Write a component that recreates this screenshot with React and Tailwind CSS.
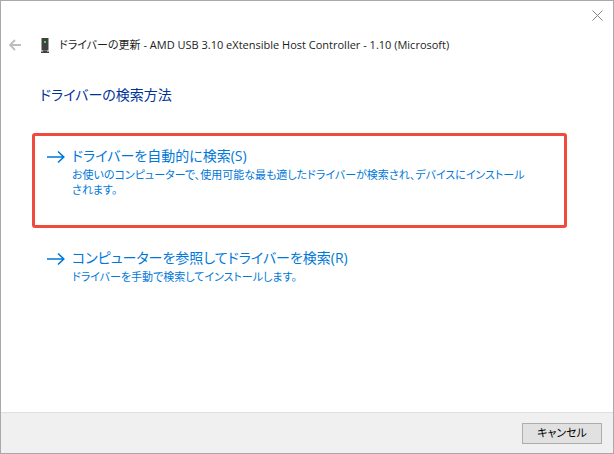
import { useState } from "react";

const choices = [
  {
    id: "auto",
    title: "ドライバーを自動的に検索(S)",
    lines: [
      "お使いのコンピューターで、使用可能な最も適したドライバーが検索され、デバイスにインストール",
      "されます。",
    ],
  },
  {
    id: "browse",
    title: "コンピューターを参照してドライバーを検索(R)",
    lines: ["ドライバーを手動で検索してインストールします。"],
  },
];

function ArrowRight() {
  return (
    <svg viewBox="0 0 18 14" className="mt-[5px] h-[14px] w-[18px] shrink-0" fill="none" stroke="currentColor" strokeWidth="1.6" aria-hidden="true">
      <path d="M0 7H17M11 1.5L16.8 7L11 12.5" />
    </svg>
  );
}

function BackArrow() {
  return (
    <svg viewBox="0 0 12 12" className="h-3 w-3" fill="none" stroke="currentColor" strokeWidth="1.8" aria-hidden="true">
      <path d="M12 6H1M6 1L1 6L6 11" />
    </svg>
  );
}

function DeviceIcon() {
  return (
    <svg viewBox="0 0 8 15" className="h-[15px] w-2 shrink-0" aria-hidden="true">
      <path d="M.5 0H7.5V12.5H.5Z" fill="#404040" />
      <path d="M2 12.5H6V13.5H8V15H0V13.5H2Z" fill="#404040" />
      <path d="M3 3H5V5H3Z" fill="#3ddc4a" />
    </svg>
  );
}

function Choice({ choice, highlighted, onSelect }) {
  return (
    <button
      type="button"
      onClick={onSelect}
      className={
        "flex w-full items-start gap-[7px] rounded-[3px] border-3 px-3 pt-[9px] text-left text-[#0078d7] " +
        (highlighted ? "h-[95px] border-[#f04a3e]" : "border-transparent pb-3")
      }
    >
      <ArrowRight />
      <span className="min-w-0">
        <span className="block text-[14px] leading-[22px]">{choice.title}</span>
        {choice.lines.map((line) => (
          <span key={line} className="block text-[11px] leading-[15px] whitespace-nowrap">
            {line}
          </span>
        ))}
      </span>
    </button>
  );
}

export default function App() {
  const [selected, setSelected] = useState("auto");

  return (
    <div className="flex min-h-screen flex-col border border-[#a9a9a9] bg-white font-['Open_Sans','Noto_Sans_CJK_JP',sans-serif] text-[11px] text-[#1c1c1c] [font-feature-settings:'palt']">
      <div className="flex h-7 items-center justify-end pr-[10px]">
        <button type="button" aria-label="閉じる" className="text-[#858585]">
          <svg viewBox="0 0 11 11" className="h-[11px] w-[11px]" fill="none" stroke="currentColor" aria-hidden="true">
            <path d="M.5 .5L10.5 10.5M10.5 .5L.5 10.5" />
          </svg>
        </button>
      </div>

      <header className="flex h-8 items-center pl-2">
        <button type="button" aria-label="戻る" className="text-[#bdbdbd]">
          <BackArrow />
        </button>
        <div className="ml-5 flex items-center gap-[10px]">
          <DeviceIcon />
          <h1 className="leading-4 whitespace-nowrap">
            ドライバーの更新 - AMD USB 3.10 eXtensible Host Controller - 1.10 (Microsoft)
          </h1>
        </div>
      </header>

      <main className="flex-1 pr-[46px] pl-[31px]">
        <h2 className="mt-[23px] pl-2 text-[14px] leading-[22px] text-[#003399]">ドライバーの検索方法</h2>
        <div className="mt-[27px] flex flex-col gap-[7px]">
          {choices.map((choice) => (
            <Choice
              key={choice.id}
              choice={choice}
              highlighted={choice.id === selected}
              onSelect={() => setSelected(choice.id)}
            />
          ))}
        </div>
      </main>

      <footer className="flex h-[41px] items-center justify-end border-t border-[#dfdfdf] bg-[#f0f0f0] pr-[11px]">
        <button type="button" className="h-[21px] w-20 border border-[#adadad] bg-[#e1e1e1] leading-4 text-black">
          キャンセル
        </button>
      </footer>
    </div>
  );
}
